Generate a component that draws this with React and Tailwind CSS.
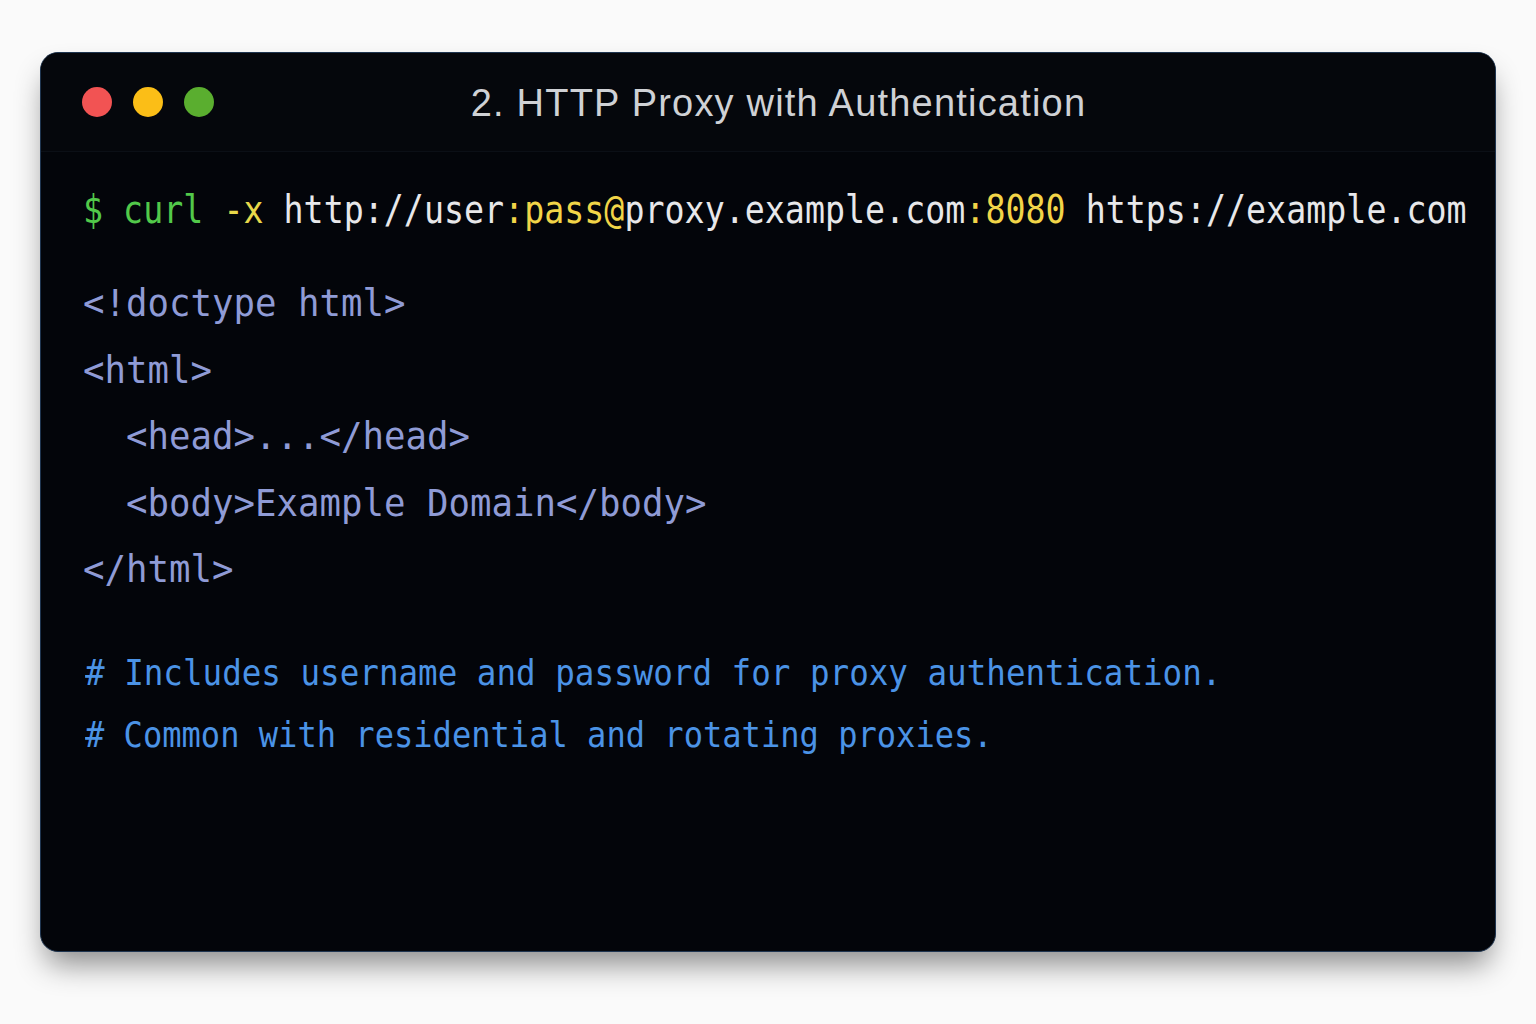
export default function App() {
  const mono = { fontFamily: '"DejaVu Sans Mono", "Liberation Mono", monospace' };
  return (
    <div className="w-[1536px] h-[1024px] bg-[#fafafa] pt-[52px] pl-[40px]">
      <div className="w-[1456px] h-[900px] rounded-[18px] border-[1.5px] border-[#1f3550] bg-[#03050a] overflow-hidden shadow-[0_18px_30px_-6px_rgba(0,0,0,0.45)] flex flex-col">
        <div className="h-[99px] shrink-0 bg-[#05070c] border-b border-[#0b0f16] flex items-center relative">
          <div className="flex items-center gap-[21px] pl-[41px]">
            <div className="w-[30px] h-[30px] rounded-full bg-[#f25353]" />
            <div className="w-[30px] h-[30px] rounded-full bg-[#fbbe17]" />
            <div className="w-[30px] h-[30px] rounded-full bg-[#5aae2f]" />
          </div>
          <div className="absolute inset-0 flex items-center justify-center pl-[21px] pt-[3px]">
            <span className="text-[38px] tracking-[1.2px] text-[#cfd1d5]" style={{ fontFamily: '"Liberation Sans", Arial, sans-serif' }}>
              2. HTTP Proxy with Authentication
            </span>
          </div>
        </div>
        <div className="flex flex-col pl-[42px] pt-[32px]" style={mono}>
          <div className="h-[52px] flex items-center whitespace-pre text-[39px] scale-x-[0.854] origin-left">
            <span className="text-[#52c94a]">$ curl </span>
            <span className="text-[#e8d84a]">-x </span>
            <span className="text-[#e8e8ea]">http://user</span>
            <span className="text-[#f2d548]">:pass@</span>
            <span className="text-[#e8e8ea]">proxy.example.com</span>
            <span className="text-[#f2d548]">:8080 </span>
            <span className="text-[#e8e8ea]">https://example.com</span>
          </div>
          <div className="mt-[35px] flex flex-col text-[#8f9bd6] text-[37px] leading-[66.5px] whitespace-pre scale-x-[0.965] origin-left">
            <div>{'<!doctype html>'}</div>
            <div>{'<html>'}</div>
            <div>{'  <head>...</head>'}</div>
            <div>{'  <body>Example Domain</body>'}</div>
            <div>{'</html>'}</div>
          </div>
          <div className="mt-[38px] ml-[2px] flex flex-col text-[#4b93e6] text-[36px] leading-[62px] whitespace-pre">
            <div className="scale-x-[0.904] origin-left">{'# Includes username and password for proxy authentication.'}</div>
            <div className="scale-x-[0.891] origin-left">{'# Common with residential and rotating proxies.'}</div>
          </div>
        </div>
      </div>
    </div>
  );
}
